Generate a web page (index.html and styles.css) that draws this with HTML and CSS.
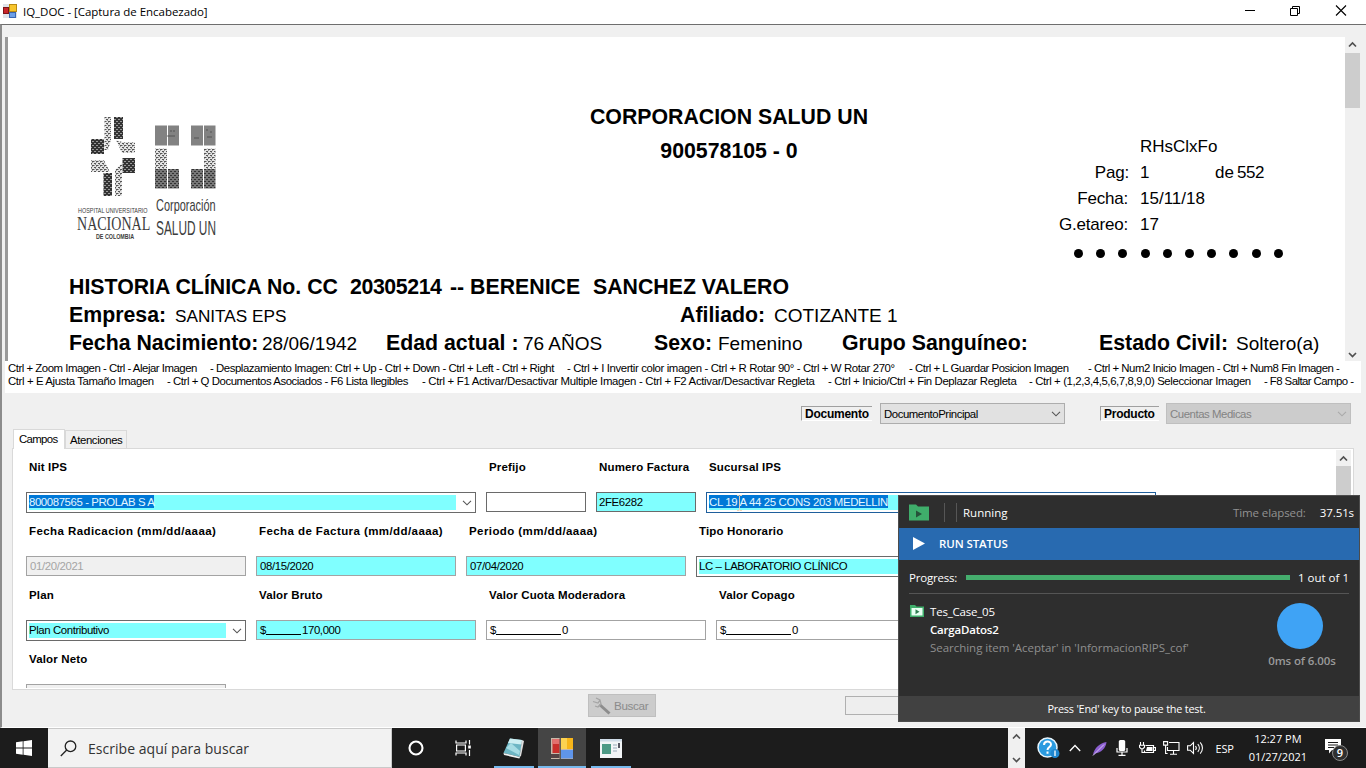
FILE: index.html
```html
<!DOCTYPE html>
<html lang="es">
<head>
<meta charset="utf-8">
<title>IQ_DOC - [Captura de Encabezado]</title>
<link rel="stylesheet" href="styles.css">
</head>
<body>
<div class="screen">
  <header class="titlebar">
    <svg class="app-icon" width="14" height="14" viewBox="0 0 14 14">
      <rect x="0" y="0" width="14" height="14" fill="#dfe3ea"/>
      <rect x="0.5" y="3.5" width="5" height="6" fill="#c8242b" stroke="#7c1518"/>
      <rect x="6.5" y="0.5" width="7" height="7" fill="#f7c52c" stroke="#b98a12"/>
      <rect x="6.5" y="8.5" width="6" height="5" fill="#6d9fe8" stroke="#3a66b0"/>
    </svg>
    <span class="title-text">IQ_DOC - [Captura de Encabezado]</span>
    <svg class="win-buttons" width="106" height="14" viewBox="0 0 106 14" fill="none" stroke="#000" stroke-width="1">
      <path d="M0 6.500h10"/>
      <path d="M45.500 4.500h7v7h-7zM47.500 4.500v-2h7v7h-2"/>
      <path d="M91 1.500l10 10M101 1.500l-10 10" stroke-width="1.100"/>
    </svg>
  </header>

  <main class="window">
    <section class="viewer">
      <div class="page">
        <div class="page-head">
          <svg class="logos" width="142" height="132" viewBox="15 8 142 132">
            <defs>
              <pattern id="dark" width="4" height="4" patternUnits="userSpaceOnUse"><rect width="4" height="4" fill="#333"/><path d="M0 .5h2M2 2.500h2" stroke="#999"/></pattern>
              <pattern id="mid" width="4" height="4" patternUnits="userSpaceOnUse"><rect width="4" height="4" fill="#777"/><path d="M0 .5h2M2 2.500h2" stroke="#333"/></pattern>
              <pattern id="light" width="4" height="4" patternUnits="userSpaceOnUse"><rect width="4" height="4" fill="#e4e4e4"/><path d="M0 .5h2.500M2 2.500h2.500" stroke="#555"/><path d="M0 1.500h1M3 3.500h1" stroke="#999"/></pattern>
            </defs>
            <path fill="url(#dark)" d="M54 12h9v22h-9zM31 34h13v15H31zM62.500 53H75v15H62.500zM43.500 68H52v23h-8.500z"/>
            <path fill="url(#light)" d="M44.500 12h6.500v23l-3 10h-3.500zM56 35l6 2h13v11H62zM31 55h13l6 12H31zM55 65l7-7v33h-7z"/>
            <path fill="#828282" d="M95 20.500h12v20H95zM108 20.500h11v20h-11zM131 20.500h12v20h-12zM144 20.500h11.500v20H144z"/>
            <path stroke="#4a4a4a" fill="none" d="M107 31h8M110 26h2M113 26h2M134 33h5M147 32h5M146 25h2M150 27h2" stroke-width=".8"/>
            <path fill="url(#light)" d="M95 43.500h12V64H95zM144 43.500h11.500V64H144z"/>
            <path fill="url(#mid)" d="M95 64h12v19.500H95zM108 64h11v19.500h-11zM131 64h12v19.500h-12zM144 64h11.500v19.500H144z"/>
            <g font-family="Liberation Sans, sans-serif" fill="#3c3c3c">
              <text transform="translate(18 108) scale(.68 1)" font-size="8">HOSPITAL UNIVERSITARIO</text>
              <text transform="translate(17 124.500) scale(.78 1)" font-size="18" font-family="Liberation Serif, serif">NACIONAL</text>
              <text transform="translate(36 134) scale(.67 1)" font-size="8" font-weight="bold">DE COLOMBIA</text>
              <text transform="translate(96 105.500) scale(.685 1)" font-size="16">Corporación</text>
              <text transform="translate(96 130) scale(.565 1)" font-size="21">SALUD UN</text>
            </g>
          </svg>
          <div class="corp"><b>CORPORACION SALUD UN</b><b>900578105 - 0</b></div>
          <div class="meta">
            <dl class="meta-list">
              <dt></dt><dd>RHsClxFo</dd>
              <dt class="near">Pag:</dt><dd><span class="page-no">1</span><span class="of">de</span><span class="tight">552</span></dd>
              <dt>Fecha:</dt><dd>15/11/18</dd>
              <dt>G.etareo:</dt><dd>17</dd>
            </dl>
            <div class="dots"><i></i><i></i><i></i><i></i><i></i><i></i><i></i><i></i><i></i><i></i></div>
          </div>
        </div>
        <div class="line history"><b>HISTORIA CLÍNICA No. CC</b><b class="tight">20305214</b><b>-- BERENICE</b><b>SANCHEZ VALERO</b></div>
        <div class="line company"><b>Empresa:</b><span class="small">SANITAS EPS</span><b>Afiliado:</b><span>COTIZANTE 1</span></div>
        <div class="line person"><b>Fecha Nacimiento:</b><span>28/06/1942</span><b>Edad actual :</b><span>76 AÑOS</span><b>Sexo:</b><span>Femenino</span><b>Grupo Sanguíneo:</b><b>Estado Civil:</b><span>Soltero(a)</span></div>
      </div>
      <div class="scroll">
        <svg width="15" height="16" viewBox="0 0 15 16"><path d="M4 9.500l3.500-3.500 3.500 3.500" fill="none" stroke="#505050" stroke-width="1.700"/></svg>
        <div class="thumb"></div>
        <svg class="down" width="15" height="16" viewBox="0 0 15 16"><path d="M4 8l3.500 3.500L11 8" fill="none" stroke="#505050" stroke-width="1.700"/></svg>
      </div>
    </section>

    <section class="help">
      <div class="help-row first"><span class="k1">Ctrl + Zoom Imagen - Ctrl - Alejar Imagen</span><span class="k2">- Desplazamiento Imagen: Ctrl + Up - Ctrl + Down - Ctrl + Left - Ctrl + Right</span><span class="k3">- Ctrl + I Invertir color imagen - Ctrl + R Rotar 90° - Ctrl + W Rotar 270°</span><span class="k1">- Ctrl + L Guardar Posicion Imagen</span><span class="k1">- Ctrl + Num2 Inicio Imagen - Ctrl + Num8 Fin Imagen -</span></div>
      <div class="help-row second"><span class="k3">Ctrl + E Ajusta Tamaño Imagen</span><span class="k2">- Ctrl + Q Documentos Asociados - F6 Lista Ilegibles</span><span class="k4">- Ctrl + F1 Activar/Desactivar Multiple Imagen - Ctrl + F2 Activar/Desactivar Regleta</span><span class="k3">- Ctrl + Inicio/Ctrl + Fin Deplazar Regleta</span><span class="k3">- Ctrl + (1,2,3,4,5,6,7,8,9,0) Seleccionar Imagen</span><span class="k5">- F8 Saltar Campo -</span></div>
    </section>

    <div class="toolbar">
      <span class="tag doc">Documento</span>
      <div class="picker">DocumentoPrincipal<svg width="10" height="6" viewBox="0 0 10 6"><path d="M1 .8l4 4 4-4" fill="none" stroke="#555" stroke-width="1.100"/></svg></div>
      <span class="tag prod">Producto</span>
      <div class="picker off">Cuentas Medicas<svg width="10" height="6" viewBox="0 0 10 6"><path d="M1 .8l4 4 4-4" fill="none" stroke="#aaa" stroke-width="1.100"/></svg></div>
    </div>

    <nav class="tabs"><span class="tab active">Campos</span><span class="tab">Atenciones</span></nav>

    <section class="tab-page">
      <div class="form">
        <div class="form-row">
          <div class="cell w450"><label>Nit IPS</label><div class="combo"><div class="fill"><mark>800087565 - PROLAB S A</mark></div><svg width="10" height="6" viewBox="0 0 10 6"><path d="M1 .8l4 4 4-4" fill="none" stroke="#555" stroke-width="1.100"/></svg></div></div>
          <div class="cell w100"><label>Prefijo</label><div class="input dark"></div></div>
          <div class="cell w100"><label>Numero Factura</label><div class="input dark cyan">2FE6282</div></div>
          <div class="cell w450"><label>Sucursal IPS</label><div class="combo focus"><div class="fill wider"><mark>CL 19 A 44 25 CONS 203 MEDELLIN</mark><svg class="ibeam" width="7" height="16" viewBox="0 0 7 16"><path d="M1 .5h2l.5.5.5-.5h2M3.500 1v14M1 15.500h2l.5-.5.5.5h2" fill="none" stroke="#f3d2b0" stroke-width=".9"/></svg></div></div></div>
        </div>
        <div class="form-row">
          <div class="cell w220"><label class="wide">Fecha Radicacion (mm/dd/aaaa)</label><div class="input disabled">01/20/2021</div></div>
          <div class="cell w200"><label class="wide">Fecha de Factura (mm/dd/aaaa)</label><div class="input cyan">08/15/2020</div></div>
          <div class="cell w220"><label class="wide">Periodo (mm/dd/aaaa)</label><div class="input cyan">07/04/2020</div></div>
          <div class="cell w450"><label>Tipo Honorario</label><div class="combo"><div class="fill">LC – LABORATORIO CLÍNICO</div></div></div>
        </div>
        <div class="form-row">
          <div class="cell w220"><label>Plan</label><div class="combo"><div class="fill">Plan Contributivo</div><svg width="10" height="6" viewBox="0 0 10 6"><path d="M1 .8l4 4 4-4" fill="none" stroke="#555" stroke-width="1.100"/></svg></div></div>
          <div class="cell w220"><label>Valor Bruto</label><div class="input cyan money">$<u class="u6"></u>170,000</div></div>
          <div class="cell w220"><label>Valor Cuota Moderadora</label><div class="input money">$<u class="u11"></u>0</div></div>
          <div class="cell w220"><label>Valor Copago</label><div class="input money">$<u class="u11"></u>0</div></div>
        </div>
        <div class="form-row">
          <div class="cell w200"><label>Valor Neto</label><div class="input disabled"></div></div>
        </div>
      </div>
      <div class="scroll inner">
        <svg width="15" height="16" viewBox="0 0 15 16"><path d="M4 10.500l3.500-3.500 3.500 3.500" fill="none" stroke="#505050" stroke-width="1.700"/></svg>
        <div class="thumb"></div>
      </div>
    </section>

    <footer class="actions">
      <button class="buscar"><svg width="20" height="18" viewBox="0 0 20 18"><path d="M7.500 7.500l10 9" stroke="#8d8d8d" stroke-width="3"/><path d="M1 4.500l5 1.500 2-3M4 1l4 2 1 4-3 3-3-1" stroke="#a5a5a5" fill="none" stroke-width="1.300"/></svg>Buscar</button>
      <div class="box"></div>
    </footer>
  </main>

  <aside class="runner">
    <div class="run-head">
      <svg width="20" height="17" viewBox="0 0 20 17"><path d="M0 .5h7l2 2h11v14H0z" fill="#3fae6b"/><path d="M7 6.500l6 3.500-6 3.500z" fill="#26523a"/></svg>
      <i class="sep a"></i><i class="sep b"></i>
      <span class="running">Running</span>
      <span class="elapsed">Time elapsed:</span><span class="secs">37.51s</span>
    </div>
    <div class="run-status"><svg width="12" height="13" viewBox="0 0 12 13"><path d="M0 0l12 6.500L0 13z" fill="#fff"/></svg>RUN STATUS</div>
    <div class="run-body">
      <div class="progress"><span class="pl">Progress:</span><i></i><span>1 out of 1</span></div>
      <div class="task">
        <svg width="14" height="12" viewBox="0 0 14 12"><path d="M0 0h5l1.500 1.500H14V12H0z" fill="#3fae6b"/><path d="M1.500 3h11v7.500h-11z" fill="#e8fff2"/><path d="M5.500 4.300l4 2.500-4 2.500z" fill="#2f7d50"/></svg>
        <div class="task-text"><p>Tes_Case_05</p><p class="strong">CargaDatos2</p><p class="dim">Searching item 'Aceptar' in 'InformacionRIPS_cof'</p></div>
        <div class="timer"><i></i><span>0ms of 6.00s</span></div>
      </div>
    </div>
    <div class="run-foot">Press 'End' key to pause the test.</div>
  </aside>

  <div class="taskbar">
    <div class="start"><svg width="16" height="16" viewBox="0 0 16 16" fill="#fff"><path d="M0 2.300L6.700 1.300v6.300H0zM7.500 1.200L16 0v7.600H7.500zM0 8.400h6.700v6.300L0 13.700zM7.500 8.400H16V16l-8.500-1.200z"/></svg></div>
    <div class="search"><svg width="17" height="17" viewBox="0 0 17 17" fill="none" stroke="#222" stroke-width="1.300"><circle cx="10.500" cy="6.300" r="5.300"/><path d="M6.700 10L.8 16"/></svg>Escribe aquí para buscar</div>
    <div class="slot"><svg width="16" height="16" viewBox="0 0 16 16"><circle cx="8" cy="8" r="6.500" fill="none" stroke="#fff" stroke-width="2.100"/></svg></div>
    <div class="slot view"><svg width="17" height="16" viewBox="0 0 17 16" fill="none" stroke="#fff" stroke-width="1.200"><path d="M1 .5v2.500h10V.5M1 15.500V13h10v2.500M1.600 5h8.800v6H1.600zM14.500 0v4.500M14.500 10v6"/><path d="M13.200 5.500h2.600v3h-2.600z" fill="#fff" stroke="none"/></svg></div>
    <div class="slot open"><svg width="24" height="22" viewBox="0 0 24 22"><path d="M8 1.500l12 1.500-2 17L1.500 16z" fill="#6db6c4"/><path d="M8 1.500l12 1.500-.5 4.500L6 6z" fill="#cdeef2"/><path d="M4 11l13 7 1-4L9 6z" fill="#a6dce4"/><path d="M1.500 16L18 20l-.7 1.500L2 18z" fill="#f0f3f3"/><path d="M20 3l2 1-3 15-1.500 1z" fill="#ddd"/></svg></div>
    <div class="slot current"><svg width="22" height="21" viewBox="0 0 22 21"><rect width="22" height="21" fill="#c8b8a8"/><path d="M1.500 1h7v14h-7z" fill="#c9302c"/><path d="M1.500 1h7v5h-7z" fill="#e2716e"/><path d="M10 0h12v11H10z" fill="#f7b519"/><path d="M10 0h6v11h-6z" fill="#fbd252"/><path d="M10 12h12v8.500H10z" fill="#5f95ea"/><path d="M0 16h8.500v4H0z" fill="#544"/><path d="M9.200 0v21" stroke="#333"/></svg></div>
    <div class="slot open"><svg width="22" height="19" viewBox="0 0 22 19"><rect width="22" height="19" fill="#f2f5f7"/><rect width="22" height="2.500" fill="#cfdce8"/><rect x="2" y="5" width="9" height="10" fill="#4d9a86"/><path d="M13 6h4M13 9h4M13 12h4" stroke="#9ab"/><path d="M19 4v5" stroke="#223" stroke-width="1.500"/></svg></div>
    <div class="spin"><svg width="17" height="40" viewBox="0 0 17 40" fill="none" stroke="#505050" stroke-width="1.600"><path d="M5 10.500l3.500-3.500 3.500 3.500M5 30l3.500 3.500L12 30"/></svg></div>
    <div class="tray">
      <svg class="t-help" width="24" height="22" viewBox="0 0 24 22"><circle cx="10.500" cy="10.500" r="9.500" fill="#2b9be0" stroke="#e8f5fd" stroke-width="1.500"/><path d="M7 8c0-4.500 7-4.500 7-.5 0 2.500-3.500 2.500-3.500 5.500M10.500 14.500v2.200" fill="none" stroke="#fff" stroke-width="2"/><circle cx="18" cy="16.500" r="4.500" fill="#1f86cf"/><path d="M18 13.500v5.500" stroke="#fff" stroke-width="1.300"/></svg>
      <svg class="t-up" width="12" height="8" viewBox="0 0 12 8"><path d="M.8 7L6 1.500 11.200 7" fill="none" stroke="#fff" stroke-width="1.300"/></svg>
      <svg class="t-pen" width="15" height="15" viewBox="0 0 15 15"><path d="M1 14C2 7 8 2 14.500 1 14 7 9 12 3 12.500z" fill="#8c5fd0"/><path d="M1 14.500L12 3.500" stroke="#d8c4f5"/></svg>
      <svg class="t-mic" width="12" height="16" viewBox="0 0 12 16"><rect x="2.800" y="0" width="6.400" height="11" rx="1.500" fill="#fff"/><path d="M1 8v4h10V8M6 12v3M2.500 15.300h7" fill="none" stroke="#fff" stroke-width="1.200"/></svg>
      <svg class="t-bat" width="17" height="12" viewBox="0 0 17 12"><path d="M6.500 3.500h8v7h-9v-2M15 5.500h1.500v3H15" fill="none" stroke="#fff" stroke-width="1.200"/><path d="M8 5h5.500v4H7z" fill="#fff"/><path d="M1.500 0v3M4.500 0v3M.5 3.200h5v2l-1.500 1.500H2L.5 5.200zM3 7v3.500h3" fill="none" stroke="#fff" stroke-width="1.100"/></svg>
      <svg class="t-net" width="17" height="14" viewBox="0 0 17 14"><path d="M6 1.500h10v8H4.500V6M10.500 9.500v3.500M7 13.300h7" fill="none" stroke="#fff" stroke-width="1.100"/><path d="M.6.600h4v3.500h-4zM2.600 4v8.500h2" fill="none" stroke="#fff" stroke-width="1.100"/></svg>
      <svg class="t-vol" width="17" height="14" viewBox="0 0 17 14" fill="none" stroke="#fff" stroke-width="1.100"><path d="M.6 4.800h2.600L6.500 1.500v11L3.200 9.200H.6zM8.500 5c1 1.200 1 2.800 0 4M10.800 3.200c2 2.200 2 5.400 0 7.600M13.200 1.300c3 3.300 3 8.100 0 11.400"/></svg>
      <span class="t-lang">ESP</span>
      <div class="t-clock"><span>12:27 PM</span><span>01/27/2021</span></div>
      <svg class="t-note" width="26" height="24" viewBox="0 0 26 24"><path d="M1 1h16v11H8l-3 3.500V12H1z" fill="#fff"/><path d="M4 4.500h10M4 7h10M4 9.500h6" stroke="#1c1c1c"/><circle cx="16" cy="15" r="7.500" fill="#2f2f2f" stroke="#8a8a8a"/><text x="16" y="19" text-anchor="middle" font-family="Open Sans, sans-serif" font-size="11" font-weight="600" fill="#fff">9</text></svg>
    </div>
  </div>
</div>
</body>
</html>
```
FILE: styles.css
```css
* { box-sizing: border-box; }
body { margin: 0; }
i { display: block; font-style: normal; }
p, dl, dd { margin: 0; }
svg { display: block; flex: none; }

.screen {
  position: relative;
  display: flex;
  flex-direction: column;
  width: 1366px;
  height: 768px;
  overflow: hidden;
  background: #f0f0f0;
  color: #000;
  font: 11.4px "Liberation Sans", Arial, sans-serif;
  white-space: nowrap;
}

/* Title bar */
.titlebar {
  display: flex;
  align-items: center;
  height: 24px;
  padding: 0 15px 2px 3px;
  background: #fff;
  font: 11.5px "Open Sans", sans-serif;
}
.title-text { margin-left: 6px; letter-spacing: -0.04px; }
.win-buttons { margin-left: auto; }

.window {
  display: flex;
  flex-direction: column;
  height: 704px;
  padding: 12px 5px 0 3px;
  border-top: 1px solid #6e6e6e;
  border-left: 2px solid #8c8c8c;
  border-bottom: 1px solid #fff;
}

/* Scanned document */
.viewer { display: flex; width: 1355px; height: 324px; }
.page {
  width: 1340px;
  padding-left: 61px;
  border-left: 3px solid #999;
  background: #fff;
  font-size: 19px;
  overflow: hidden;
}
.page b { font-size: 21.3px; }
.page-head {
  display: grid;
  grid-template-columns: 421px 480px auto;
  height: 236px;
}
.logos { margin: 76px 0 0 6px; }
.corp {
  display: flex;
  flex-direction: column;
  width: 478px;
  padding-top: 63px;
  line-height: 34px;
  text-align: center;
}
.meta { padding-top: 97px; font-size: 17px; line-height: 26px; }
.meta-list { display: grid; grid-template-columns: 158px auto; column-gap: 12px; }
.meta-list dt { text-align: right; letter-spacing: -0.2px; }
.meta-list .near { margin-right: -1px; }
.meta-list dd { display: flex; height: 26px; }
.page-no { width: 75px; }
.of { width: 22px; }
.dots { display: flex; gap: 13.2px; padding: 11px 0 0 104px; }
.dots i { width: 9px; height: 9px; border-radius: 50%; background: #000; }
.line {
  display: grid;
  align-items: baseline;
  height: 28px;
  line-height: 28px;
}
.tight { letter-spacing: -0.4px; }
.history { grid-template-columns: 281px 100px 143px auto; }
.company { grid-template-columns: 106px 505px 94px auto; }
.company .small { font-size: 17.2px; line-height: 26px; }
.person { grid-template-columns: 193px 124px 137px 131px 64px 124px 257px 137px auto; }

.scroll {
  display: flex;
  flex-direction: column;
  width: 15px;
  background: #f0f0f0;
}
.scroll .thumb { height: 55px; background: #cdcdcd; }
.scroll .down { margin-top: auto; }

/* Shortcut help */
.help {
  width: 1356px;
  height: 32px;
  padding: 1px 0 0 3px;
  background: #fff;
}
.help-row { display: grid; height: 13px; line-height: 13px; }
.first { grid-template-columns: 202px 357px 342px 179px auto; }
.second { grid-template-columns: 159px 255px 406px 201px 235px auto; }
.k1 { letter-spacing: -0.48px; }
.k2 { letter-spacing: -0.45px; }
.k3 { letter-spacing: -0.39px; }
.k4 { letter-spacing: -0.32px; }
.k5 { letter-spacing: -0.56px; }

/* Document and product pickers */
.toolbar { display: flex; align-items: flex-start; padding: 10px 0 0 796px; }
.tag {
  height: 15px;
  margin-top: 3px;
  padding-left: 3px;
  border-top: 1px solid #a0a0a0;
  border-left: 1px solid #a0a0a0;
  border-bottom: 1px solid #fff;
  font: bold 12px/15px "Liberation Sans", sans-serif;
  letter-spacing: -0.25px;
}
.doc { width: 71px; margin-right: 8px; }
.prod { width: 59px; margin: 3px 7px 0 35px; }
.picker {
  display: flex;
  align-items: center;
  justify-content: space-between;
  width: 185px;
  height: 21px;
  padding: 0 3px;
  border: 1px solid #adadad;
  background: #e1e1e1;
  letter-spacing: -0.45px;
}
.picker.off { border-color: #bfbfbf; background: #ccc; color: #838383; }

/* Tabs */
.tabs { display: flex; align-items: flex-end; height: 24px; padding-left: 8px; }
.tab {
  width: 62px;
  height: 18px;
  padding-left: 4px;
  border: 1px solid #d9d9d9;
  border-bottom: 0;
  line-height: 18px;
  letter-spacing: -0.4px;
}
.tab.active {
  z-index: 1;
  width: 52px;
  height: 20px;
  padding-left: 5px;
  margin-bottom: -1px;
  background: #fff;
  line-height: 18px;
  letter-spacing: -0.65px;
}
.tab-page {
  display: flex;
  justify-content: space-between;
  width: 1342px;
  height: 242px;
  margin-left: 7px;
  padding: 1px 2px 2px 13px;
  border: 1px solid #d9d9d9;
  background: #fff;
}
.inner .thumb { height: 190px; }

/* Form */
.form { height: 238px; padding-top: 10px; overflow: hidden; }
.form-row { display: flex; gap: 10px; height: 64px; }
.cell label {
  display: block;
  height: 14px;
  margin: 0 0 18px 3px;
  font: bold 11.5px/14px "Liberation Sans", sans-serif;
  letter-spacing: 0.15px;
}
.cell .wide { letter-spacing: 0.42px; }
.w100 { width: 100px; }
.w200 { width: 200px; }
.w220 { width: 220px; }
.w450 { width: 450px; }
.input {
  height: 20px;
  padding-left: 3px;
  border: 1px solid #a3a3a3;
  background: #fff;
  line-height: 18px;
  letter-spacing: -0.37px;
}
.input.dark { padding-left: 2px; border-color: #6a6a6a; }
.input.cyan { background: #80ffff; }
.input.disabled { background: #f0f0f0; color: #a5a5a5; }
.money { display: flex; }
.money u { height: 14px; margin-right: 1px; border-bottom: 1px solid #000; text-decoration: none; }
.u6 { width: 35px; }
.u11 { width: 65px; }
.combo {
  display: flex;
  align-items: center;
  justify-content: space-between;
  height: 21px;
  padding: 0 3px 0 2px;
  border: 1px solid #6a6a6a;
  background: #fff;
}
.combo.focus { border-color: #1f5f9c; }
.fill {
  position: relative;
  flex: 1;
  height: 15px;
  margin-right: 6px;
  background: #80ffff;
  line-height: 15px;
  letter-spacing: -0.4px;
}
.fill.wider { letter-spacing: -0.34px; }
.fill mark {
  display: inline-block;
  height: 13px;
  line-height: 14px;
  vertical-align: top;
  background: #0078d7;
  color: #e4f6ff;
}
.ibeam { position: absolute; left: 27px; top: 0; }

/* Actions */
.actions { display: flex; padding: 4px 0 0 583px; }
.buscar {
  display: flex;
  align-items: center;
  gap: 2px;
  width: 68px;
  height: 23px;
  padding: 0 3px;
  border: 1px solid #bfbfbf;
  background: #ccc;
  color: #8b8b8b;
  font: 11.7px "Liberation Sans", sans-serif;
  letter-spacing: -0.35px;
}
.box { width: 180px; height: 19px; margin: 2px 0 0 189px; border: 1px solid #b0b0b0; background: #eee; }

/* Test runner overlay */
.runner {
  position: absolute;
  left: 898px;
  top: 495px;
  display: flex;
  flex-direction: column;
  width: 462px;
  height: 227px;
  border: 1px solid #4c4c4c;
  background: #2e2e2e;
  color: #fff;
  font: 11.5px "Open Sans", sans-serif;
}
.run-head { display: flex; align-items: center; height: 32px; padding: 1px 5px 0 10px; }
.sep { width: 1px; height: 19px; background: #565656; }
.sep.a { margin-left: 15px; }
.sep.b { margin-left: 11px; }
.running { margin-left: 6px; }
.elapsed { margin-left: auto; color: #929292; letter-spacing: -0.1px; }
.secs { margin-left: 14px; letter-spacing: -0.1px; }
.run-status {
  display: flex;
  align-items: center;
  gap: 14px;
  height: 32px;
  padding: 0 0 1px 14px;
  background: #286ab0;
  font-weight: 600;
  letter-spacing: -0.1px;
}
.run-body { flex: 1; padding: 0 10px; }
.progress {
  display: flex;
  align-items: center;
  height: 34px;
  padding-top: 2px;
  border-bottom: 1px solid #555;
}
.pl { width: 57px; letter-spacing: -0.2px; }
.progress i { width: 324px; height: 5px; margin-right: 8px; background: #45ae6e; }
.task { display: flex; padding-top: 9px; }
.task > svg { margin: 2px 0 0 1px; }
.task-text { margin-left: 6px; line-height: 18px; }
.task-text p { letter-spacing: -0.2px; }
.task-text .strong { font-weight: 600; }
.task-text .dim { color: #8f8f8f; letter-spacing: -0.03px; }
.timer {
  display: flex;
  flex-direction: column;
  align-items: center;
  width: 68px;
  margin-left: auto;
  margin-right: 13px;
  color: #9a9a9a;
  font-weight: 600;
  letter-spacing: -0.1px;
}
.timer i { width: 46px; height: 46px; margin: 0 5px 4px 0; border-radius: 50%; background: #3fa3f5; }
.run-foot {
  height: 25px;
  padding-right: 5px;
  background: #414141;
  font-size: 10.9px;
  line-height: 25px;
  text-align: center;
  letter-spacing: -0.22px;
}

/* Taskbar */
.taskbar { display: flex; height: 40px; background: #1c1c1c; color: #fff; }
.start, .slot { display: flex; align-items: center; justify-content: center; width: 48px; }
.search {
  display: flex;
  align-items: center;
  gap: 11px;
  width: 344px;
  padding-left: 12px;
  border: 1px solid #c9c9c9;
  border-left: 0;
  background: #f2f2f2;
  color: #333;
  font: 14px "Open Sans", sans-serif;
  letter-spacing: 0.04px;
}
.slot { width: 49px; }
.view { padding-right: 3px; }
.open { background: linear-gradient(#76b9ed, #76b9ed) center bottom / 40px 2px no-repeat; }
.current { width: 48px; background: linear-gradient(#76b9ed, #76b9ed) center bottom / 48px 2px no-repeat, #454545; }
.spin { width: 17px; margin-left: 373px; background: #f0f0f0; }
.tray { display: flex; align-items: center; width: 341px; padding-left: 12px; font: 11px "Open Sans", sans-serif; }
.t-up { margin-left: 8px; }
.t-pen { margin-left: 11px; }
.t-mic { margin-left: 9px; }
.t-bat { margin-left: 11px; }
.t-net { margin-left: 7px; }
.t-vol { margin-left: 7px; }
.t-lang { margin-left: 11px; letter-spacing: -0.1px; }
.t-clock { display: flex; flex-direction: column; align-items: center; width: 60px; margin-left: 14px; line-height: 18px; }
.t-note { margin: 4px 0 0 16px; }
```
